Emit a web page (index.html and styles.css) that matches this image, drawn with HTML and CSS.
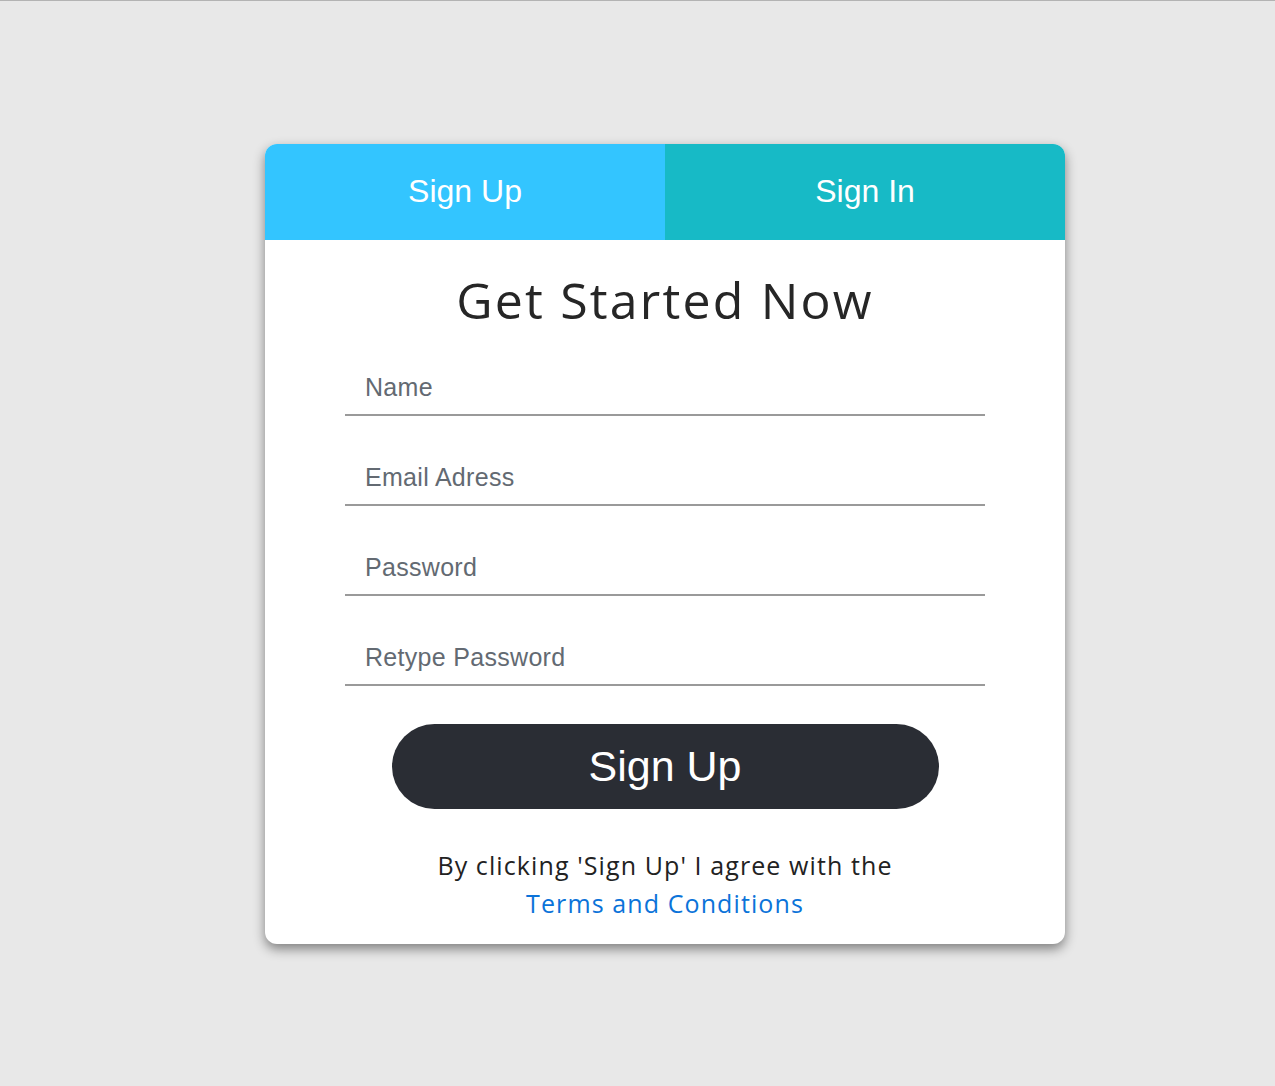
FILE: index.html
```html
<!DOCTYPE html>
<html lang="en">
<head>
<meta charset="utf-8">
<title>Sign Up</title>
<link rel="stylesheet" href="styles.css">
</head>
<body>
<main class="page">
  <section class="card">
    <nav class="tabs">
      <a class="tab tab-signup" href="#">Sign Up</a>
      <a class="tab tab-signin" href="#">Sign In</a>
    </nav>
    <div class="content">
      <h1 class="title">Get Started Now</h1>
      <form class="form">
        <input class="field" type="text" placeholder="Name">
        <input class="field" type="email" placeholder="Email Adress">
        <input class="field" type="password" placeholder="Password">
        <input class="field" type="password" placeholder="Retype Password">
        <button class="submit" type="button">Sign Up</button>
      </form>
      <p class="terms">By clicking 'Sign Up' I agree with the<br><a class="terms-link" href="#">Terms and Conditions</a></p>
    </div>
  </section>
</main>
</body>
</html>
```
FILE: styles.css
```css
html, body {
  margin: 0;
  padding: 0;
}
body {
  background: #e8e8e8;
  border-top: 1px solid #b3b3b3;
  min-height: 1085px;
  font-family: "Liberation Sans", Arial, sans-serif;
}
.page {
  padding: 143px 0 0 265px;
}
.card {
  width: 800px;
  height: 800px;
  background: #ffffff;
  border-radius: 12px;
  overflow: hidden;
  box-shadow: 0 5px 12px rgba(0, 0, 0, 0.45);
  display: flex;
  flex-direction: column;
}
.tabs {
  display: flex;
  height: 96px;
}
.tab {
  flex: 1;
  display: flex;
  align-items: center;
  justify-content: center;
  padding-bottom: 2px;
  box-sizing: border-box;
  color: #ffffff;
  text-decoration: none;
  font-family: "Liberation Sans", Arial, sans-serif;
  font-size: 32px;
}
.tab-signup {
  background: #33c5ff;
}
.tab-signin {
  background: #17bac6;
}
.content {
  display: flex;
  flex-direction: column;
  align-items: center;
}
.title {
  margin: 30px 0 0;
  height: 96px;
  font-family: "Open Sans", sans-serif;
  font-weight: 400;
  font-size: 50px;
  line-height: 60px;
  letter-spacing: 2.2px;
  color: #262626;
}
.form {
  width: 640px;
  display: flex;
  flex-direction: column;
  align-items: center;
  gap: 40px;
}
.field {
  width: 100%;
  height: 50px;
  box-sizing: border-box;
  border: none;
  border-bottom: 2px solid #9a9a9a;
  padding: 0 20px 6px;
  font-family: "Liberation Sans", Arial, sans-serif;
  font-size: 25px;
  letter-spacing: 0.3px;
  color: #333;
  outline: none;
  background: transparent;
}
.field::placeholder {
  color: #636a72;
}
.submit {
  margin-top: -2px;
  width: 547px;
  height: 85px;
  border: none;
  border-radius: 43px;
  background: #2a2d34;
  color: #ffffff;
  font-family: "Liberation Sans", Arial, sans-serif;
  font-size: 43px;
  cursor: pointer;
}
.terms {
  margin: 37px 0 0;
  text-align: center;
  font-family: "Open Sans", sans-serif;
  font-size: 25px;
  letter-spacing: 1.1px;
  line-height: 38px;
  color: #222222;
}
.terms-link {
  color: #0b73d9;
  text-decoration: none;
}
```
